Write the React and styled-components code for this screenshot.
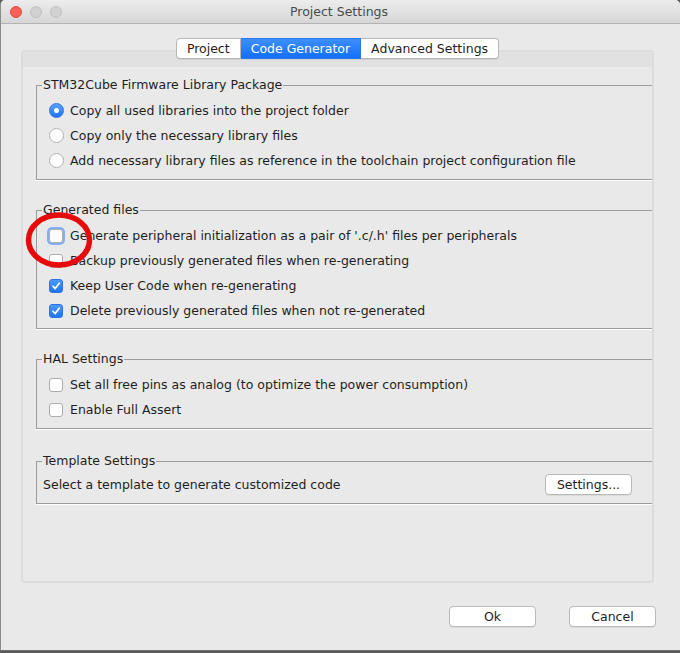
import styled, { createGlobalStyle } from "styled-components";

const GlobalStyle = createGlobalStyle`
  html, body {
    margin: 0;
    padding: 0;
    background: #5a5a5a;
  }
  body {
    font-family: "Lucida Grande", "DejaVu Sans", sans-serif;
    font-size: 12.5px;
    color: #1e1e1e;
  }
  * {
    box-sizing: border-box;
  }
`;

const Window = styled.div`
  position: relative;
  width: 680px;
  height: 651px;
  background: #e9e9e9;
  border-left: 1px solid #8c8c8c;
  border-bottom: 1px solid #6e6e6e;
  border-radius: 5px 5px 0 0;
  display: flex;
  flex-direction: column;
  overflow: hidden;
`;

const TitleBar = styled.div`
  height: 24px;
  flex: none;
  display: flex;
  align-items: center;
  padding-left: 9px;
  background: linear-gradient(#ececec, #d6d6d6);
  border-bottom: 1px solid #b3b3b3;
`;

const Lights = styled.div`
  display: flex;
  gap: 8px;
`;

const Light = styled.span`
  width: 12px;
  height: 12px;
  border-radius: 50%;
  background: ${({ $color }) => $color};
  border: 1px solid ${({ $ring }) => $ring};
`;

const Title = styled.div`
  flex: 1;
  text-align: center;
  margin-right: 64px;
  font-size: 12.5px;
  color: #4a4a4a;
`;

const Body = styled.div`
  flex: 1;
  display: flex;
  flex-direction: column;
  padding: 14px 26px 24px 20px;
`;

const TabRow = styled.div`
  display: flex;
  justify-content: center;
  margin-bottom: -9px;
  position: relative;
  z-index: 1;
`;

const Tab = styled.div`
  height: 21px;
  padding: 0 10px;
  display: flex;
  align-items: center;
  background: ${({ $active }) =>
    $active ? "linear-gradient(#3d8ffb, #146ff6)" : "#ffffff"};
  color: ${({ $active }) => ($active ? "#ffffff" : "#1e1e1e")};
  border: 1px solid ${({ $active }) => ($active ? "#2a78f0" : "#b6b6b6")};
  border-left-width: ${({ $first }) => ($first ? "1px" : "0")};
  border-radius: ${({ $first, $last }) =>
    $first ? "4px 0 0 4px" : $last ? "0 4px 4px 0" : "0"};
  box-shadow: 0 1px 0 rgba(0, 0, 0, 0.08);
`;

const Panel = styled.div`
  height: 533px;
  border: 2px solid #dcdcdc;
  border-radius: 4px;
  background: #e9e9e9;
  display: flex;
  flex-direction: column;
  overflow: hidden;
`;

const PanelStrip = styled.div`
  height: 15px;
  flex: none;
  background: #e1e1e1;
`;

const PanelContent = styled.div`
  position: relative;
  display: flex;
  flex-direction: column;
  gap: 22px;
  padding: 10px 0 0 13px;
`;

const Group = styled.fieldset`
  margin: 0;
  margin-top: ${({ $mt }) => $mt || 0}px;
  padding: ${({ $pt }) => $pt ?? 5}px 0 ${({ $pb }) => $pb ?? 5}px 0;
  min-inline-size: 0;
  border: 1px solid #9b9b9b;
  border-right: none;
  box-shadow: 0 1px 0 #ffffff;
`;

const Legend = styled.legend`
  padding: 0 1px;
  margin-left: 5px;
  line-height: 16px;
`;

const Row = styled.label`
  height: 25px;
  display: flex;
  align-items: center;
  gap: ${({ $gap }) => $gap || 7}px;
  padding-left: 12px;
  white-space: nowrap;
`;

const Radio = styled.span`
  width: 15px;
  height: 15px;
  flex: none;
  border-radius: 50%;
  background: ${({ $on }) =>
    $on ? "linear-gradient(#5aa1fb, #1f74f5)" : "#ffffff"};
  border: 1px solid ${({ $on }) => ($on ? "#2b74e3" : "#b2b2b2")};
  display: flex;
  align-items: center;
  justify-content: center;
  &::after {
    content: "";
    width: 5px;
    height: 5px;
    border-radius: 50%;
    background: ${({ $on }) => ($on ? "#ffffff" : "transparent")};
  }
`;

const Check = styled.span`
  width: 14px;
  height: 14px;
  flex: none;
  border-radius: 3px;
  display: flex;
  align-items: center;
  justify-content: center;
  background: ${({ $on }) =>
    $on ? "linear-gradient(#4d97fa, #1f74f5)" : "#ffffff"};
  border: 1px solid ${({ $on }) => ($on ? "#2b74e3" : "#adadad")};
  box-shadow: ${({ $focus }) =>
    $focus ? "0 0 0 2px rgba(90, 150, 245, 0.7)" : "none"};
`;

const TemplateRow = styled.div`
  height: 25px;
  display: flex;
  align-items: center;
  justify-content: space-between;
  padding: 0 20px 0 6px;
`;

const Button = styled.button`
  font: inherit;
  color: #1e1e1e;
  width: 87px;
  height: 21px;
  padding: 0;
  background: #ffffff;
  border: 1px solid #b9b9b9;
  border-radius: 4px;
  box-shadow: 0 1px 0 rgba(0, 0, 0, 0.06);
`;

const Footer = styled.div`
  display: flex;
  justify-content: flex-end;
  gap: 33px;
  margin-top: 23px;
  margin-right: -2px;
`;

const Annotation = styled.svg`
  position: absolute;
  left: -2px;
  top: 139px;
  pointer-events: none;
`;

const Tick = () => (
  <svg width="10" height="10" viewBox="0 0 10 10">
    <path
      d="M2 5.2 L4.2 7.6 L8.2 2.2"
      fill="none"
      stroke="#ffffff"
      strokeWidth="1.7"
      strokeLinecap="round"
      strokeLinejoin="round"
    />
  </svg>
);

const CheckRow = ({ on, focus, children }) => (
  <Row>
    <Check $on={on} $focus={focus}>
      {on && <Tick />}
    </Check>
    {children}
  </Row>
);

const RadioRow = ({ on, children }) => (
  <Row $gap={6}>
    <Radio $on={on} />
    {children}
  </Row>
);

export default function App() {
  return (
    <>
      <GlobalStyle />
      <Window>
        <TitleBar>
          <Lights>
            <Light $color="#fc5f57" $ring="#de4a41" />
            <Light $color="#d1d1d1" $ring="#c2c2c2" />
            <Light $color="#d1d1d1" $ring="#c2c2c2" />
          </Lights>
          <Title>Project Settings</Title>
        </TitleBar>
        <Body>
          <TabRow>
            <Tab $first>Project</Tab>
            <Tab $active>Code Generator</Tab>
            <Tab $last>Advanced Settings</Tab>
          </TabRow>
          <Panel>
            <PanelStrip />
            <PanelContent>
              <Group $pb={6}>
                <Legend>STM32Cube Firmware Library Package</Legend>
                <RadioRow on>Copy all used libraries into the project folder</RadioRow>
                <RadioRow>Copy only the necessary library files</RadioRow>
                <RadioRow>
                  Add necessary library files as reference in the toolchain
                  project configuration file
                </RadioRow>
              </Group>
              <Group>
                <Legend>Generated files</Legend>
                <CheckRow focus>
                  Generate peripheral initialization as a pair of '.c/.h'
                  files per peripherals
                </CheckRow>
                <CheckRow>Backup previously generated files when re-generating</CheckRow>
                <CheckRow on>Keep User Code when re-generating</CheckRow>
                <CheckRow on>
                  Delete previously generated files when not re-generated
                </CheckRow>
              </Group>
              <Group $mt={0} $pb={6}>
                <Legend>HAL Settings</Legend>
                <CheckRow>
                  Set all free pins as analog (to optimize the power
                  consumption)
                </CheckRow>
                <CheckRow>Enable Full Assert</CheckRow>
              </Group>
              <Group $mt={2} $pt={3} $pb={6}>
                <Legend>Template Settings</Legend>
                <TemplateRow>
                  Select a template to generate customized code
                  <Button>Settings...</Button>
                </TemplateRow>
              </Group>
              <Annotation width="80" height="70" viewBox="0 0 80 70">
                <ellipse
                  cx="38"
                  cy="34"
                  rx="30.5"
                  ry="25"
                  fill="none"
                  stroke="#e60a0a"
                  strokeWidth="5.5"
                />
              </Annotation>
            </PanelContent>
          </Panel>
          <Footer>
            <Button>Ok</Button>
            <Button>Cancel</Button>
          </Footer>
        </Body>
      </Window>
    </>
  );
}
